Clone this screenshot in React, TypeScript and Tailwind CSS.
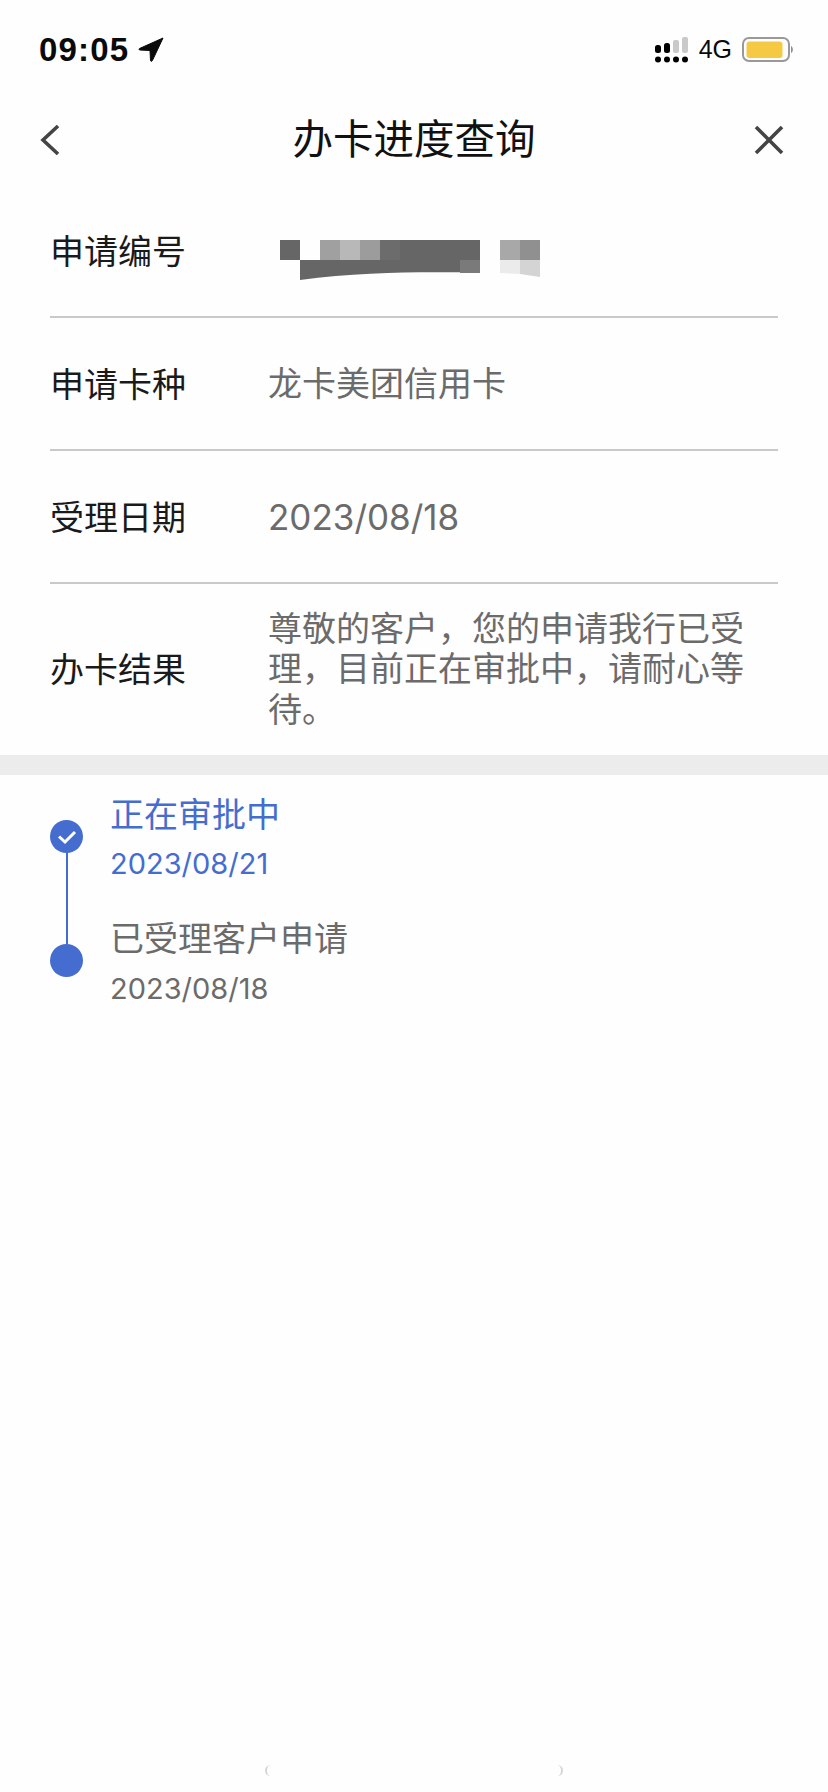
const cjk = "font-['Inter','Noto_Sans_CJK_SC',sans-serif]";
const resultText = '尊敬的客户\uFF0C您的申请我行已受理\uFF0C目前正在审批中\uFF0C请耐心等待。';

function Mosaic() {
  return (
    <svg width="260" height="60" viewBox="0 0 260 60" className="block">
      <rect x="0" y="0" width="20" height="20" fill="#666666" />
      <rect x="40" y="0" width="20" height="20" fill="#a0a0a0" />
      <rect x="60" y="0" width="20" height="20" fill="#b8b8b8" />
      <rect x="80" y="0" width="20" height="20" fill="#9c9c9c" />
      <rect x="100" y="0" width="20" height="20" fill="#6c6c6c" />
      <rect x="120" y="0" width="80" height="20" fill="#666666" />
      <path d="M20 20H200V33C160 32 90 31 20 40Z" fill="#666666" />
      <rect x="180" y="20" width="20" height="13" fill="#7a7a7a" />
      <rect x="220" y="0" width="20" height="20" fill="#a8a8a8" />
      <rect x="240" y="0" width="20" height="20" fill="#909090" />
      <path d="M220 20H240V34L220 33Z" fill="#ebebeb" />
      <path d="M240 20H260V37L240 34Z" fill="#d4d4d4" />
    </svg>
  );
}

function Row({ label, children, last }: { label: string; children: React.ReactNode; last?: boolean }) {
  return (
    <div className={`flex items-center ${last ? 'h-[171px]' : 'h-[133px] pt-[2px] border-b-2 border-[#c9c9c9]'}`}>
      <div className="w-[218px] shrink-0 text-[34px] text-[#1a1a1a]">{label}</div>
      <div className="text-[34px] leading-[40.5px] text-[#6b6b6b] w-[490px]">{children}</div>
    </div>
  );
}

export default function App() {
  return (
    <div className={`h-[1792px] overflow-hidden bg-[#fefefe] flex flex-col ${cjk}`}>
      {/* status bar */}
      <div className="h-[100px] flex items-center justify-between pl-[39px] pr-[33px] shrink-0">
        <div className="flex items-center gap-[9px]">
          <span className="font-['Liberation_Sans',sans-serif] font-bold text-[33px] tracking-[1.2px] text-[#0a0a0a]">09:05</span>
          <svg width="26" height="26" viewBox="0 0 26 26">
            <path d="M25 1L1.5 11.5C0.6 12 1 13 2 13L12 13.5L12.5 23.5C12.6 24.5 14 24.6 14.4 23.6Z" fill="#0a0a0a" stroke="#0a0a0a" strokeWidth="1" strokeLinejoin="round" />
          </svg>
        </div>
        <div className="flex items-center gap-[10px]">
          <svg width="34" height="26" viewBox="0 0 34 26">
            <rect x="0" y="8" width="6" height="8" rx="2.5" fill="#000" />
            <rect x="9" y="6" width="6" height="10" rx="2.5" fill="#000" />
            <rect x="18" y="3" width="6" height="13" rx="2" fill="#c9c9c9" />
            <rect x="27" y="0" width="6" height="16" rx="2" fill="#c9c9c9" />
            <circle cx="3" cy="22.5" r="3" fill="#000" />
            <circle cx="12" cy="22.5" r="3" fill="#000" />
            <circle cx="21" cy="22.5" r="3" fill="#000" />
            <circle cx="30" cy="22.5" r="3" fill="#000" />
          </svg>
          <span className="font-['Liberation_Sans',sans-serif] text-[25px] text-[#0a0a0a]">4G</span>
          <svg width="53" height="26" viewBox="0 0 53 26">
            <rect x="1" y="1" width="46" height="23" rx="6" fill="none" stroke="#999999" strokeWidth="2" />
            <rect x="4.5" y="4.5" width="36" height="16.5" rx="3" fill="#f6c944" />
            <path d="M49 9C51.5 10 51.5 15 49 16Z" fill="#8f8f8f" />
          </svg>
        </div>
      </div>

      {/* nav */}
      <div className="h-[80px] mb-[5px] relative flex items-center justify-between px-[40px] shrink-0">
        <svg width="20" height="32" viewBox="0 0 20 32">
          <path d="M18 2L3 16L18 30" fill="none" stroke="#444444" strokeWidth="3.6" />
        </svg>
        <div className="absolute inset-x-0 text-center text-[40.5px] text-[#111111]">办卡进度查询</div>
        <svg width="32" height="32" viewBox="0 0 32 32" className="mr-[3px]">
          <path d="M3 3L29 29M29 3L3 29" fill="none" stroke="#444444" strokeWidth="3.6" />
        </svg>
      </div>

      {/* detail rows */}
      <div className="mx-[50px] shrink-0">
        <Row label="申请编号">
          <div className="pt-[36px] pl-[12px]">
            <Mosaic />
          </div>
        </Row>
        <Row label="申请卡种">龙卡美团信用卡</Row>
        <Row label="受理日期"><span className="text-[35px]">2023/08/18</span></Row>
        <Row label="办卡结果" last>{resultText}</Row>
      </div>

      <div className="h-[20px] bg-[#ececec] shrink-0" />

      {/* timeline */}
      <div className="flex pl-[50px] pt-[15px] shrink-0">
        <div className="w-[33px] flex flex-col items-center pt-[30px]">
          <div className="w-[33px] h-[33px] rounded-full bg-[#456dcf] flex items-center justify-center">
            <svg width="20" height="16" viewBox="0 0 20 16">
              <path d="M2 7.5L8 13L18 3" fill="none" stroke="#ffffff" strokeWidth="3" />
            </svg>
          </div>
          <div className="w-[2px] h-[91px] bg-[#456dcf]" />
          <div className="w-[33px] h-[33px] rounded-full bg-[#456dcf]" />
        </div>
        <div className="pl-[27px] pt-[1px]">
          <div className="h-[124px]">
            <div className="text-[34px] leading-[48px] text-[#456dcf]">正在审批中</div>
            <div className="text-[29px] leading-[40px] text-[#456dcf] mt-[5px]">2023/08/21</div>
          </div>
          <div>
            <div className="text-[34px] leading-[48px] text-[#6b6b6b]">已受理客户申请</div>
            <div className="text-[29px] leading-[40px] text-[#6b6b6b] mt-[6px]">2023/08/18</div>
          </div>
        </div>
      </div>

      {/* faint remains of the home indicator */}
      <div className="mt-auto mb-[16px] mx-auto w-[298px] h-[11px] flex justify-between">
        <div className="w-[12px] h-[11px] rounded-l-full border-l-2 border-[#d5d5d5]" />
        <div className="w-[12px] h-[11px] rounded-r-full border-r-2 border-[#d5d5d5]" />
      </div>
    </div>
  );
}
